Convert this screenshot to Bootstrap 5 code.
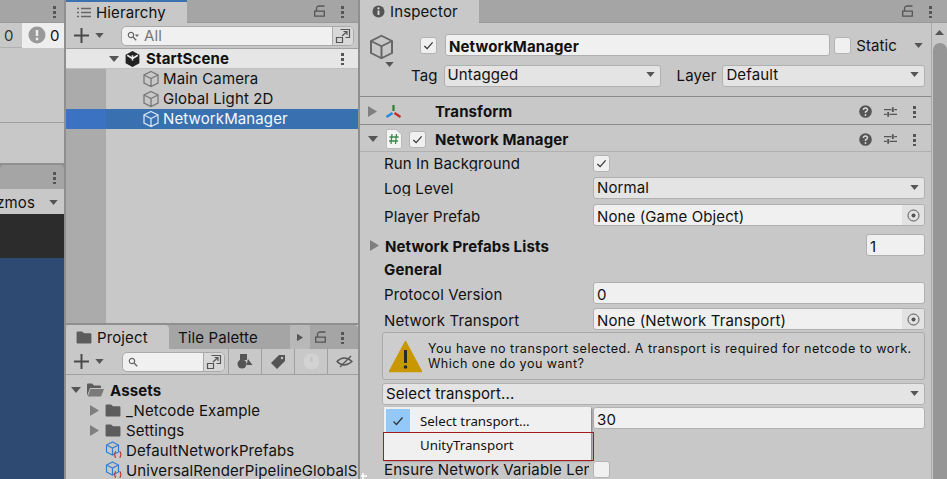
<!DOCTYPE html>
<html lang="en">
<head>
<meta charset="UTF-8">
<title>Unity Inspector</title>
<link href="https://cdn.jsdelivr.net/npm/bootstrap@5.3.0/dist/css/bootstrap.min.css" rel="stylesheet">
<style>
body { width: 947px; height: 479px; overflow: hidden; background: #8f8f8f; font-family: Inter, "Noto Sans", sans-serif; font-size: 15px; letter-spacing: .12px; color: #111; line-height: 1; }
svg { flex: none; display: block; }
.col-left { width: 64px; }
.col-mid { width: 292px; margin-left: 2px; }
.col-right { width: 587px; margin-left: 2px; }
.pane { background: #c8c8c8; overflow: hidden; }
.tabbar { height: 23px; background: #a5a5a5; border-bottom: 1px solid #999; }
.tab-on { height: 23px; background: #c8c8c8; gap: 5px; }
.tab-hier { width: 121px; padding-left: 11px; border-top: 2px solid #3a72b0; }
.tab-insp { width: 119px; padding: 1px 0 0 12px; }
.toolbar { height: 26px; border-bottom: 1px solid #a0a0a0; }
.dots { width: 3px; height: 13px; background: radial-gradient(circle, #555 1.5px, transparent 1.7px) 0 0 / 3px 5px; }
.dots-end { margin: 0 14px 0 16px; }
.dots-insp { margin-right: 15px; }
.add-caret { margin-left: 6px; }

/* left stub */
.stub-count { height: 25px; background: #c8c8c8; border-bottom: 1px solid #b0b0b0; }
.stub-zero { color: #333; }
.stub-white { background: #eee; width: 42px; height: 25px; margin-left: auto; gap: 4px; padding-left: 6px; }
.stub-a { height: 75px; border-bottom: 1px solid #a0a0a0; }
.stub-b { height: 40px; }
.stub-tab { height: 24px; margin-top: 2px; background: #a5a5a5; border-radius: 4px 4px 0 0; }
.stub-gizmo { height: 25px; padding-top: 1px; background: #c8c8c8; overflow: hidden; }
.gizmo-bar { width: 1px; height: 14px; background: #8a8a8a; margin: 0 6px 0 8px; }
.gizmo-caret { margin-right: 6px; }
.stub-dark { height: 44px; background: #2c2c2c; }
.stub-blue { background: #2f4a72; flex: 1; }

/* hierarchy */
.hier-top { height: 323px; }
.hier-body { flex: 1; background: linear-gradient(90deg, #ababab 40px, #c8c8c8 40px); }
.search { background: #f0f0f0; border: 1px solid #aaa; border-radius: 5px; height: 20px; color: #777; overflow: hidden; }
.search-hier { width: 233px; margin: 0 4px 0 auto; }
.search-proj { width: 103px; margin-left: 18px; }
.mag-ico { margin: 0 5px; }
.search-btn { width: 21px; height: 100%; background: #d8d8d8; border-left: 1px solid #aaa; margin-left: auto; }
.tree-row { height: 20px; white-space: nowrap; }
.scene-row { height: 20px; background: #e6e6e6; border-bottom: 1px solid #c0c0c0; font-weight: 700; padding-left: 43px; gap: 5px; }
.go-row { padding-left: 76px; padding-bottom: 1px; gap: 3px; }
.cube-grey { color: #777; }
.cube-light { color: #d5e2f0; }
.go-sel { background: linear-gradient(90deg, #3c72c2 40px, #3870b0 40px); color: #f4f8fc; }

/* project */
.proj-pane { margin-top: 2px; flex: 1; }
.proj-tabs { height: 24px; background: #a5a5a5; border-radius: 4px 4px 0 0; }
.proj-tab { width: 103px; height: 24px; background: #c8c8c8; border-radius: 4px 4px 0 0; padding-left: 10px; gap: 5px; }
.proj-tab2 { width: 121px; padding-left: 9px; }
.proj-arrow { width: 20px; height: 24px; background: #b8b8b8; }
.proj-lock { margin-left: 5px; }
.proj-dots { margin-left: 15px; }
.filter-cell { width: 33px; height: 25px; border-left: 1px solid #a0a0a0; }
.filter-first { margin-left: 3px; }
.filter-eye { width: 30px; padding-left: 8px; overflow: hidden; }
.tree-wrap { padding-top: 5px; }
.row-assets { padding-left: 5px; gap: 6px; }
.row-folder { padding-left: 24px; gap: 5.5px; }
.row-so { padding-left: 39px; gap: 3px; }

/* inspector */
.insp-body { flex: 1; min-height: 0; }
.insp-main { flex: 1; min-width: 0; }
.insp-head { height: 74px; padding-top: 11px; border-bottom: 1px solid #8c8c8c; }
.name-line { height: 22px; padding-left: 8px; }
.cube-box { width: 27px; height: 28px; margin-top: 4px; color: #666; }
.cube-caret { position: absolute; left: 25px; top: 28px; }
.chk-name { margin-left: 25px; }
.name-field { margin-left: 8px; padding: 0 0 0 2px; }
.static-lbl { margin-left: 5px; }
.static-caret { margin: 0 8px 0 17px; }
.tag-line { height: 23px; margin-top: 8px; padding-left: 51px; gap: 6px; }
.tag-drop { width: 217px; }
.layer-lbl { margin-left: 10px; }
.layer-drop { margin-right: 6px; }
.chk { width: 17px; height: 17px; background: #f0f0f0; border: 1px solid #b4b4b4; border-radius: 3px; }
.txt-field { height: 22px; background: #f0f0f0; border: 1px solid #b0b0b0; border-radius: 3px; padding: 2px 3px 0; white-space: nowrap; overflow: hidden; }
.drop-field { height: 22px; background: #e4e4e4; border: 1px solid #b0b0b0; border-radius: 3px; padding: 0 5px 2px 3px; }
.comp-row { height: 28px; padding-top: 2px; border-bottom: 1px solid #8c8c8c; font-weight: 700; padding-right: 15px; }
.comp-row2 { height: 27px; border-bottom-color: #b0b0b0; }
.comp-tools { margin-left: auto; }
.tool-gap { margin-left: 12px; }
.tool-gap2 { margin-left: 16px; }
.lbl-transform { margin-left: 33px; }
.lbl-netman { margin-left: 9px; }
.chk-comp { margin-left: 7px; }
.prop { padding-left: 24px; padding-right: 6px; white-space: nowrap; }
.prop-lbl { width: 209px; flex: none; overflow: hidden; }
.lbl-low { padding-top: 2px; }
.lbl-cut { width: 205px; margin-right: 4px; }
.prop-val { flex: 1; min-width: 0; }
.h-run { height: 23px; }
.h-log { height: 22px; margin-top: 2px; }
.h-player { height: 22px; margin-top: 5px; }
.h-lists { height: 22px; margin-top: 8px; padding-left: 10px; }
.lists-lbl { margin-left: 6px; }
.count-field { width: 59px; }
.h-general { height: 22px; margin-top: 2px; }
.h-proto { height: 22px; margin-top: 2px; }
.h-trans { height: 22px; margin-top: 4px; }
.help-box { height: 48px; margin: 2px 6px 0 22px; border: 1px solid #aaa; border-radius: 3px; background: #cdcdcd; font-size: 12.6px; line-height: 15px; letter-spacing: .45px; padding-left: 6px; gap: 6px; white-space: nowrap; }
.h-select { height: 22px; margin: 3px 6px 0 22px; }
.h-thirty { height: 22px; margin-top: 2px; }
.h-ensure { height: 18px; margin-top: 31px; }
.pick-btn { width: 22px; height: 22px; margin: -2px -3px 0 auto; background: #e2e2e2; }
.scroll-col { width: 16px; border-left: 1px solid #a8a8a8; background: #c8c8c8; }
.scroll-up { margin: 7px 0 0 3px; }
.scroll-thumb { width: 14px; flex: 1; margin: 8px 0 0 1px; background: #969696; border-radius: 7px 7px 0 0; }

/* open popup */
.popup { position: absolute; left: 24px; top: 407px; width: 207px; height: 53px; background: #f0f0f0; box-shadow: 1px 1px 2px #777; font-family: "Noto Sans", sans-serif; font-size: 13.3px; letter-spacing: 0; }
.pop-row { height: 24px; padding-left: 36px; }
.pop-sel { margin-top: 2px; margin-bottom: 1px; padding-top: 2px; }
.pop-tick { position: absolute; left: 2px; top: 2px; width: 24px; height: 24px; background: #93c9f9; }
.pop-outline { position: absolute; left: -1px; top: 25px; width: 211px; height: 29px; border: 1px solid #a31c1c; }
.cursor-bit { position: absolute; left: 1px; top: 473px; }
</style>
</head>
<body class="d-flex">
<svg width="0" height="0" class="position-absolute">
  <symbol id="cube" viewBox="0 0 18 18"><path d="M9 1.500 16 5v8l-7 3.500L2 13V5zM2 5l7 3.500L16 5M9 8.500v8" fill="none" stroke="currentColor" stroke-width="1.300"/></symbol>
  <symbol id="folder" viewBox="0 0 16 14"><path d="M0 1.500Q0 .5 1 .5h5l2 2h7q1 0 1 1v9q0 1-1 1H1q-1 0-1-1z" fill="#5c5c5c"/></symbol>
  <symbol id="lock" viewBox="0 0 11 12"><path d="M.7 6.200h9.600v5H.7zM2.500 6V3.500Q2.500 1 5.500 1h5" fill="none" stroke="#555" stroke-width="1.300"/></symbol>
  <symbol id="tick" viewBox="0 0 12 12"><path d="M1.500 6.500 4.500 9.500 10.500 2.500" fill="none" stroke="#333" stroke-width="1.300"/></symbol>
  <symbol id="so" viewBox="0 0 18 18"><path d="M7.500 1 13.500 4v7l-6 3-6-3V4zM1.500 4l6 3 6-3M7.500 7v7" fill="none" stroke="#2f7fd0" stroke-width="1.200"/><path d="M11 10.500q-1 0-1 1.500t-1 1.500q1 0 1 1.500t1 1.500M14.500 10.500q1 0 1 1.500t1 1.500q-1 0-1 1.500t-1 1.500" fill="none" stroke="#c62828" stroke-width="1.200"/></symbol>
  <symbol id="help" viewBox="0 0 13 13"><circle cx="6.500" cy="6.500" r="6.300" fill="#555"/><path d="M4.500 5q0-2 2-2t2 1.800Q8.500 6 6.500 7v1" fill="none" stroke="#ddd" stroke-width="1.400"/><circle cx="6.500" cy="10" r=".9" fill="#ddd"/></symbol>
  <symbol id="sliders" viewBox="0 0 14 12"><path d="M0 3.500h8M11 3.500h3M0 8.500h3M6 8.500h8" stroke="#555" stroke-width="1.300"/><path d="M9.500 1v5M4.500 6v5" stroke="#555" stroke-width="2"/></symbol>
  <symbol id="popout" viewBox="0 0 16 16"><path d="M5.500 1.500h9v8h-4M1.500 9.500h6v5h-6zM7 8l5-4.500M8.500 3.500H12V7" fill="none" stroke="#555" stroke-width="1.200"/></symbol>
  <symbol id="mag" viewBox="0 0 10 10"><circle cx="4" cy="4" r="2.700" fill="none" stroke="#666" stroke-width="1.200"/><path d="M6 6l3.200 3.200" stroke="#666" stroke-width="1.400"/></symbol>
  <symbol id="mag-caret" viewBox="0 0 12 10"><circle cx="4" cy="4" r="2.700" fill="none" stroke="#666" stroke-width="1.200"/><path d="M6 6l3.200 3.200" stroke="#666" stroke-width="1.400"/><path d="M8 3.500h4l-2 2.500z" fill="#666"/></symbol>
  <symbol id="plus" viewBox="0 0 15 15"><path d="M7.500 0v15M0 7.500h15" stroke="#4a4a4a" stroke-width="2"/></symbol>
  <symbol id="down" viewBox="0 0 10 6"><path d="M0 0h10L5 6z" fill="#555"/></symbol>
  <symbol id="right" viewBox="0 0 9 11"><path d="M0 0l9 5.500L0 11z" fill="#7f7f7f"/></symbol>
  <symbol id="target" viewBox="0 0 13 13"><circle cx="6.500" cy="6.500" r="5.500" fill="none" stroke="#555"/><circle cx="6.500" cy="6.500" r="2" fill="#555"/></symbol>
</svg>

<div class="col-left d-flex flex-column">
  <div class="tabbar d-flex align-items-center justify-content-end pe-2"><span class="dots"></span></div>
  <div class="stub-count d-flex align-items-center">
    <span class="ms-1 stub-zero">0</span>
    <div class="stub-white d-flex align-items-center">
      <svg width="18" height="18" viewBox="0 0 18 18"><circle cx="9" cy="9" r="8.500" fill="#999"/><path d="M9 4v6" stroke="#eee" stroke-width="2.500"/><circle cx="9" cy="13" r="1.400" fill="#eee"/></svg>
      <span>0</span>
    </div>
  </div>
  <div class="stub-a pane"></div>
  <div class="stub-b pane"></div>
  <div class="stub-tab d-flex align-items-center justify-content-end pe-2"><span class="dots"></span></div>
  <div class="stub-gizmo d-flex align-items-center justify-content-end">
    <span>zmos</span>
    <span class="gizmo-bar"></span>
    <svg class="gizmo-caret" width="9" height="5"><use href="#down"/></svg>
  </div>
  <div class="stub-dark"></div>
  <div class="stub-blue"></div>
</div>

<div class="col-mid d-flex flex-column">
  <div class="hier-top d-flex flex-column pane">
    <div class="tabbar d-flex align-items-center">
      <div class="tab-on tab-hier d-flex align-items-center">
        <svg width="14" height="11" viewBox="0 0 14 11"><path d="M0 1.500h2M0 5.500h2M0 9.500h2M4 1.500h10M4 5.500h10M4 9.500h10" stroke="#666" stroke-width="1.300"/></svg>
        <span>Hierarchy</span>
      </div>
      <svg class="ms-auto" width="11" height="12"><use href="#lock"/></svg>
      <span class="dots dots-end"></span>
    </div>
    <div class="toolbar d-flex align-items-center">
      <svg class="ms-2" width="15" height="15"><use href="#plus"/></svg>
      <svg class="add-caret" width="9" height="5"><use href="#down"/></svg>
      <div class="search search-hier d-flex align-items-center">
        <svg class="mag-ico" width="12" height="10"><use href="#mag-caret"/></svg>All
        <span class="search-btn d-flex align-items-center justify-content-center"><svg width="16" height="16"><use href="#popout"/></svg></span>
      </div>
    </div>
    <div class="scene-row d-flex align-items-center">
      <svg width="10" height="8"><use href="#down"/></svg>
      <svg width="17" height="18" viewBox="0 0 16 17"><path d="M8 1 14.500 4.500v8L8 16 1.500 12.500v-8z" fill="#222"/><path d="M8 5v5M3 5l5 3 5-3" stroke="#eee" stroke-width="1.500" fill="none"/></svg>
      <span>StartScene</span>
      <span class="dots ms-auto dots-end"></span>
    </div>
    <div class="hier-body">
      <div class="tree-row go-row d-flex align-items-center"><svg class="cube-grey" width="18" height="18"><use href="#cube"/></svg>Main Camera</div>
      <div class="tree-row go-row d-flex align-items-center"><svg class="cube-grey" width="18" height="18"><use href="#cube"/></svg>Global Light 2D</div>
      <div class="tree-row go-row go-sel d-flex align-items-center"><svg class="cube-light" width="18" height="18"><use href="#cube"/></svg>NetworkManager</div>
    </div>
  </div>

  <div class="proj-pane pane d-flex flex-column">
    <div class="proj-tabs d-flex align-items-center">
      <div class="proj-tab d-flex align-items-center">
        <svg width="16" height="13"><use href="#folder"/></svg><span>Project</span>
      </div>
      <div class="proj-tab2 overflow-hidden text-nowrap">Tile Palette</div>
      <div class="proj-arrow d-flex align-items-center justify-content-center"><svg width="6" height="9" viewBox="0 0 9 11"><path d="M0 0l9 5.500L0 11z" fill="#555"/></svg></div>
      <svg class="proj-lock" width="11" height="12"><use href="#lock"/></svg>
      <span class="dots proj-dots"></span>
    </div>
    <div class="toolbar d-flex align-items-center">
      <svg class="ms-2" width="15" height="15"><use href="#plus"/></svg>
      <svg class="add-caret" width="9" height="5"><use href="#down"/></svg>
      <div class="search search-proj d-flex align-items-center">
        <svg class="mag-ico" width="10" height="10"><use href="#mag"/></svg>
        <span class="search-btn d-flex align-items-center justify-content-center"><svg width="16" height="16"><use href="#popout"/></svg></span>
      </div>
      <div class="filter-cell filter-first d-flex align-items-center justify-content-center">
        <svg width="16" height="15" viewBox="0 0 16 15"><circle cx="5" cy="10" r="4.500" fill="#555"/><path d="M3 0h7v6H3z" fill="#555"/><path d="M11 5l4.500 6h-6z" fill="#555"/></svg>
      </div>
      <div class="filter-cell d-flex align-items-center justify-content-center">
        <svg width="14" height="14" viewBox="0 0 14 14"><path d="M8 0h6v6l-8 8-6-6z" fill="#555"/><circle cx="11" cy="3" r="1.200" fill="#c8c8c8"/></svg>
      </div>
      <div class="filter-cell d-flex align-items-center justify-content-center">
        <svg width="17" height="17"><circle cx="8.500" cy="8.500" r="8" fill="#d2d2d2"/><path d="M8.500 4v5" stroke="#c2c2c2" stroke-width="2"/></svg>
      </div>
      <div class="filter-cell filter-eye">
        <svg width="18" height="25" viewBox="0 0 18 25"><path d="M1 12.500q7-7 15 0-8 7-15 0zM4 18 15 7" fill="none" stroke="#555" stroke-width="1.300"/></svg>
      </div>
    </div>
    <div class="tree-wrap">
      <div class="tree-row row-assets d-flex align-items-center fw-bold">
        <svg width="10" height="8"><use href="#down"/></svg>
        <svg width="17" height="14" viewBox="0 0 17 14"><path d="M0 1.500Q0 .5 1 .5h4l2 2h6q1 0 1 1V5H3L0 13z" fill="#5c5c5c"/><path d="M3.500 6H17l-3 7.500H.8z" fill="#7a7a7a"/></svg>
        <span>Assets</span>
      </div>
      <div class="tree-row row-folder d-flex align-items-center">
        <svg width="9" height="11"><use href="#right"/></svg>
        <svg width="16" height="13"><use href="#folder"/></svg>
        <span>_Netcode Example</span>
      </div>
      <div class="tree-row row-folder d-flex align-items-center">
        <svg width="9" height="11"><use href="#right"/></svg>
        <svg width="16" height="13"><use href="#folder"/></svg>
        <span>Settings</span>
      </div>
      <div class="tree-row row-so d-flex align-items-center">
        <svg width="18" height="18"><use href="#so"/></svg><span>DefaultNetworkPrefabs</span>
      </div>
      <div class="tree-row row-so d-flex align-items-center">
        <svg width="18" height="18"><use href="#so"/></svg><span>UniversalRenderPipelineGlobalSettings</span>
      </div>
    </div>
  </div>
</div>

<div class="col-right d-flex flex-column pane position-relative">
  <div class="tabbar d-flex align-items-center">
    <div class="tab-on tab-insp d-flex align-items-center">
      <svg width="13" height="13" viewBox="0 0 13 13"><circle cx="6.500" cy="6.500" r="6" fill="#555"/><path d="M6.500 5.500v4.500" stroke="#ddd" stroke-width="1.800"/><circle cx="6.500" cy="3.300" r="1.100" fill="#ddd"/></svg>
      <span>Inspector</span>
    </div>
    <svg class="ms-auto" width="11" height="12"><use href="#lock"/></svg>
    <span class="dots dots-end dots-insp"></span>
  </div>
  <div class="insp-body d-flex">
    <div class="insp-main">
      <div class="insp-head">
        <div class="name-line position-relative d-flex align-items-center">
          <svg class="cube-box" viewBox="0 0 18 18"><use href="#cube"/></svg>
          <svg class="cube-caret" width="9" height="5"><use href="#down"/></svg>
          <span class="chk chk-name d-flex align-items-center justify-content-center"><svg width="11" height="11"><use href="#tick"/></svg></span>
          <div class="txt-field name-field fw-bold d-flex align-items-center flex-grow-1">NetworkManager</div>
          <span class="chk ms-1"></span>
          <span class="static-lbl">Static</span>
          <svg class="static-caret" width="9" height="5"><use href="#down"/></svg>
        </div>
        <div class="tag-line d-flex align-items-center">
          <span>Tag</span>
          <div class="drop-field tag-drop d-flex align-items-center">Untagged<svg class="ms-auto" width="9" height="5"><use href="#down"/></svg></div>
          <span class="layer-lbl">Layer</span>
          <div class="drop-field layer-drop d-flex align-items-center flex-grow-1">Default<svg class="ms-auto" width="9" height="5"><use href="#down"/></svg></div>
        </div>
      </div>
      <div class="comp-row d-flex align-items-center">
        <svg class="ms-2" width="9" height="11"><use href="#right"/></svg>
        <svg class="ms-2" width="17" height="16" viewBox="0 0 17 16"><path d="M8.500 1v6" stroke="#2e7d32" stroke-width="2.200"/><path d="M7.500 9 1.500 13" stroke="#1e88e5" stroke-width="2.200"/><path d="M9.500 9l6 4" stroke="#c62828" stroke-width="2.200"/></svg>
        <span class="lbl-transform">Transform</span>
        <div class="comp-tools d-flex align-items-center">
          <svg width="13" height="13"><use href="#help"/></svg><svg class="tool-gap" width="13" height="12"><use href="#sliders"/></svg><span class="dots tool-gap2"></span>
        </div>
      </div>
      <div class="comp-row comp-row2 d-flex align-items-center">
        <svg class="ms-2" width="10" height="8"><use href="#down"/></svg>
        <svg class="ms-2" width="16" height="20" viewBox="0 0 16 20"><path d="M.5 2Q.5.500 2 .500h8l5.500 5v12.500q0 1.500-1.500 1.500H2q-1.500 0-1.500-1.500z" fill="#f4f4f4" stroke="#bbb"/><path d="M6 5 5 15M10.500 5l-1 10M3.500 8h9M3 12h9" stroke="#3b8a4a" stroke-width="1.300"/></svg>
        <span class="chk chk-comp d-flex align-items-center justify-content-center"><svg width="11" height="11"><use href="#tick"/></svg></span>
        <span class="lbl-netman">Network Manager</span>
        <div class="comp-tools d-flex align-items-center">
          <svg width="13" height="13"><use href="#help"/></svg><svg class="tool-gap" width="13" height="12"><use href="#sliders"/></svg><span class="dots tool-gap2"></span>
        </div>
      </div>
      <div class="prop h-run d-flex align-items-center">
        <span class="prop-lbl">Run In Background</span>
        <span class="chk d-flex align-items-center justify-content-center"><svg width="11" height="11"><use href="#tick"/></svg></span>
      </div>
      <div class="prop h-log d-flex align-items-center">
        <span class="prop-lbl">Log Level</span>
        <div class="prop-val drop-field d-flex align-items-center">Normal<svg class="ms-auto" width="9" height="5"><use href="#down"/></svg></div>
      </div>
      <div class="prop h-player d-flex align-items-center">
        <span class="prop-lbl lbl-low">Player Prefab</span>
        <div class="prop-val txt-field d-flex align-items-center">None (Game Object)
          <span class="pick-btn d-flex align-items-center justify-content-center"><svg width="13" height="13"><use href="#target"/></svg></span>
        </div>
      </div>
      <div class="prop h-lists d-flex align-items-center">
        <svg width="9" height="11"><use href="#right"/></svg>
        <span class="lists-lbl lbl-low fw-bold">Network Prefabs Lists</span>
        <div class="txt-field count-field d-flex align-items-center ms-auto">1</div>
      </div>
      <div class="prop h-general d-flex align-items-center fw-bold">General</div>
      <div class="prop h-proto d-flex align-items-center">
        <span class="prop-lbl lbl-low">Protocol Version</span>
        <div class="prop-val txt-field d-flex align-items-center">0</div>
      </div>
      <div class="prop h-trans d-flex align-items-center">
        <span class="prop-lbl lbl-low">Network Transport</span>
        <div class="prop-val txt-field d-flex align-items-center">None (Network Transport)
          <span class="pick-btn d-flex align-items-center justify-content-center"><svg width="13" height="13"><use href="#target"/></svg></span>
        </div>
      </div>
      <div class="help-box d-flex align-items-center">
        <svg width="33" height="33" viewBox="0 0 33 33"><path d="M16.500 1.500 32.500 31.500h-32z" fill="#c99700" stroke="#c99700" stroke-linejoin="round" stroke-width="1.500"/><path d="M16.500 10v13" stroke="#2a2a2a" stroke-width="3"/><circle cx="16.500" cy="27" r="1.800" fill="#2a2a2a"/></svg>
        <span>You have no transport selected. A transport is required for netcode to work.<br>Which one do you want?</span>
      </div>
      <div class="h-select drop-field d-flex align-items-center">Select transport...<svg class="ms-auto" width="9" height="5"><use href="#down"/></svg></div>
      <div class="prop h-thirty d-flex align-items-center">
        <span class="prop-lbl"></span>
        <div class="prop-val txt-field d-flex align-items-center">30</div>
      </div>
      <div class="prop h-ensure d-flex align-items-center">
        <span class="prop-lbl lbl-cut">Ensure Network Variable Length Safety</span>
        <span class="chk"></span>
      </div>
    </div>
    <div class="scroll-col d-flex flex-column">
      <svg class="scroll-up" width="9" height="5" viewBox="0 0 9 5"><path d="M0 5h9L4.500 0z" fill="#555"/></svg>
      <div class="scroll-thumb"></div>
    </div>
  </div>
  <div class="popup">
    <span class="pop-tick d-flex align-items-center justify-content-center"><svg width="12" height="12"><use href="#tick"/></svg></span>
    <div class="pop-row pop-sel d-flex align-items-center">Select transport...</div>
    <div class="pop-row d-flex align-items-center">UnityTransport</div>
    <div class="pop-outline"></div>
  </div>
  <svg class="cursor-bit" width="6" height="6"><path d="M2 0v6M0 3h6" stroke="#fff" stroke-width="1.500"/></svg>
</div>

<script src="https://cdn.jsdelivr.net/npm/bootstrap@5.3.0/dist/js/bootstrap.bundle.min.js"></script>
</body>
</html>
